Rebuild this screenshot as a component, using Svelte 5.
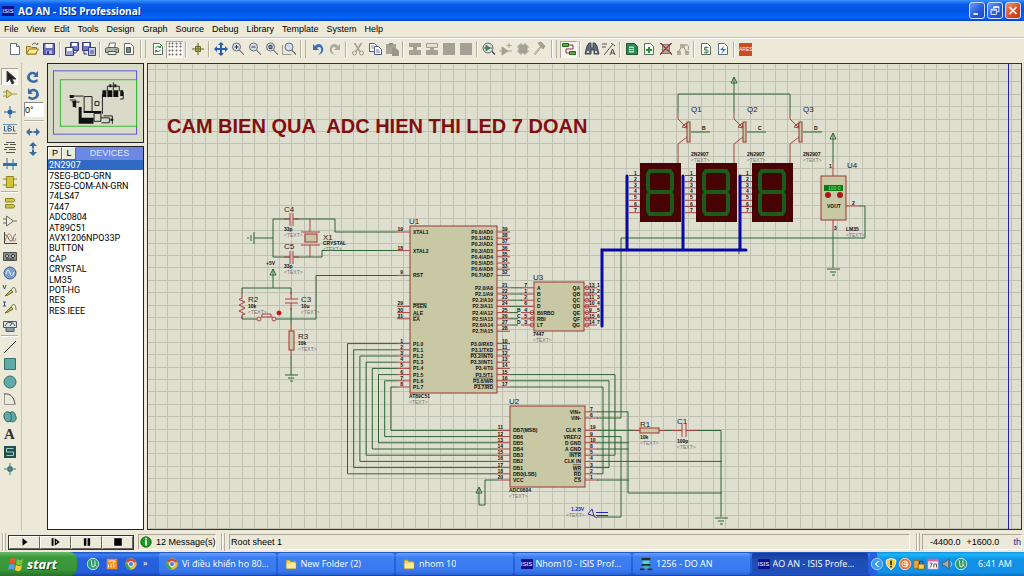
<script lang="ts">
  type Shape = [d: string, fill: string, stroke?: string];
  type Pin = [row: number, name: string, num: string, bar?: boolean];

  const circ = (x: number, y: number, r: number) => `M${x - r} ${y}a${r} ${r} 0 1 0 ${2 * r} 0a${r} ${r} 0 1 0 ${-2 * r} 0z`;
  const page = "M3.5 2.5h6l3 3v8h-9z";
  const lens: Shape[] = [
    ["M9 9l5 5", "none", "#777"],
    ["M10 9l4 4", "none", "#aaa"],
    [circ(6.5, 6, 4), "#cfe0ec", "#66717c"],
  ];

  const icons: Record<string, Shape[]> = {
    new: [[page, "#fff", "#5c6b86"], ["M9.5 2.5v3h3", "#dfe8f4", "#5c6b86"]],
    open: [["M2.5 13V5.5h4l1 1h5V13z", "#f0d060", "#93792a"], ["M2.5 13l3-5h9l-3 5z", "#ffe98c", "#93792a"], ["M8 4c2-3 4-2 5 0l1-2", "none", "#555"]],
    save: [["M2.5 2.5h11v11h-11z", "#6468ba", "#383c82"], ["M4.5 3h7v4h-7z", "#eef0ff"], ["M5 9.5h6V13H5z", "#b9bcdf"], ["M6 10h2v3H6z", "#383c82"]],
    import: [["M6.5 1.5h8v8h-8z", "#7478c0", "#383c82"], ["M8 2h5v3H8z", "#fff"], ["M1.5 6.5h8v8h-8z", "#9fa5d2", "#383c82"], ["M3 7h5v3H3z", "#fff"], ["M10 12c3 0 3-1 3-3", "none", "#243080"]],
    export: [["M1.5 1.5h8v8h-8z", "#7478c0", "#383c82"], ["M3 2h5v3H3z", "#fff"], ["M7.5 6.5h7v8h-7z", "#c6cbe6", "#383c82"], ["M9 10h4M9 12h4", "none", "#383c82"], ["M3 10v3h3", "none", "#243080"]],
    print: [["M4.5 7l1-5h6l-1 5z", "#fff", "#62706d"], ["M1.5 7.5l2-1h9l2 1v4h-13z", "#a8b5a6", "#505c55"], ["M4 10.5h8v3H4z", "#e8eee4", "#505c55"], ["M11 8h2v1h-2z", "#37a837"]],
    area: [[page, "#fff", "#5c6b66"], ["M5.5 6.5h4v5h-4z", "#7c8a86", "#49524f"]],
    refresh: [[page, "#fff", "#5c6b66"], ["M5.5 7.5a3 3 0 0 1 4-2M10.5 8.5a3 3 0 0 1-4 2", "none", "#1e9440"], ["M8 7h3V4zM8 9H5v3z", "#1e9440"]],
    grid: [["M2 2h1v1H2zM5 2h1v1H5zM9 2h1v1H9zM13 2h1v1h-1zM2 5h1v1H2zM5 5h1v1H5zM9 5h1v1H9zM13 5h1v1h-1zM2 9h1v1H2zM5 9h1v1H5zM9 9h1v1H9zM13 9h1v1h-1zM2 13h1v1H2zM5 13h1v1H5zM9 13h1v1H9zM13 13h1v1h-1z", "#333", "#777"]],
    origin: [["M8 2v12M2 8h12", "none", "#55601c"], ["M5.5 5.5h5v5h-5z", "#b7b85c", "#66702a"], ["M8 5v6M5 8h6", "none", "#66702a"]],
    pan: [["M8 1l3 3H9v3h3V5l3 3-3 3V9H9v3h2l-3 3-3-3h2V9H4v2L1 8l3-3v2h3V4H5z", "#2660b4"]],
    zoomin: [...lens, ["M6.5 4v4M4.5 6h4", "none", "#333"]],
    zoomout: [...lens, ["M4.5 6h4", "none", "#333"]],
    zoomall: [...lens, ["M5 4.5h3v3H5z", "#8a9aaa", "#444"]],
    zoomarea: [["M1.5 4v9.5h9", "none", "#999"], ["M10 9l5 5M11 9l4 4", "none", "#777"], [circ(8, 6, 4), "#cfe0ec", "#66717c"]],
    undo: [["M3 3v6h6L7 7c2-2 5-1 4 3-.5 2-2 3-3 4 4-1 6-4 5-7C12 2 7 2 5 5z", "#3d70b8"]],
    redo: [["M13 3v6H7l2-2C7 5 4 6 5 10c.5 2 2 3 3 4-4-1-6-4-5-7C4 2 9 2 11 5z", "#aaa99c"]],
    cut: [["M4 2l6 9M12 2l-6 9", "none", "#9b998c"], ["M5 2l5 8M11 2l-5 8", "none", "#9b998c"], [circ(4.5, 12, 2), "none", "#9b998c"], [circ(11.5, 12, 2), "none", "#9b998c"]],
    copy: [["M2.5 2.5h5l2 2v6h-7z", "#fff", "#4b5a86"], ["M4 5h3M4 7h3", "none", "#8090b8"], ["M7.5 5.5h4l3 3v5h-7z", "#fff", "#4b5a86"], ["M9 9h3M9 11h4", "none", "#6478b0"]],
    paste: [["M2 3h10v10H2z", "#a5a396"], ["M5 2h4v2H5z", "#8f8d81"], ["M8 7h4l3 3v5H8z", "#98968a"]],
    blockcopy: [["M2 2h12v4h-4v3h4v5H2V9h4V6H2z", "#a3a195"]],
    blockmove: [["M2.5 2.5h11v4h-4v3h-3v-3h-4z", "#e2dfcf", "#a3a195"], ["M2 9h12v5H2zM6 6h4v4H6z", "#a3a195"]],
    block: [["M2 2h12v12H2z", "#a3a195"]],
    pick: [["M10 10l4 4M11 10l3 3", "none", "#555"], [circ(7, 7, 5), "#d3e1e8", "#586c72"], ["M5 4.5v5l4-2.5z", "#67a95c", "#3c7138"], ["M3 7h8", "none", "#3c7138"]],
    make: [["M4 6v8l6-4z", "#a3a195", "#a3a195"], ["M1 10h13M11 2v5M8.5 4.5h5", "none", "#a3a195"]],
    pack: [["M4 4h8v8H4z", "#a3a195", "#a3a195"], ["M2 6h12M2 10h12M6 2v12M10 2v12", "none", "#a3a195"]],
    hammer: [["M6 2l3-1 4 4-2 3-2-2z", "#a3a195", "#a3a195"], ["M9 5l-7 8M10 5l-7 9", "none", "#a3a195"]],
    wire: [["M1.5 2.5h6v3h-6z", "#56b03d", "#256a1c"], ["M8.5 10.5h6v3h-6z", "#56b03d", "#256a1c"], ["M8 4h4v4H5v4h4", "none", "#902c4c"]],
    find: [["M3 5l2-3h2v5h2V2h2l2 3 2 8h-5V9H7v4H1z", "#5f6874", "#414a55"], ["M3 10h2v2H3zM11 10h2v2h-2z", "#c8d2dc"]],
    props: [["M1 3h5M1 6h4M3 14l9-11M10 2l4 3", "none", "#555"], ["M9 14l2.5-6 2.5 6M10 12h3", "none", "#444"]],
    netlist: [["M2.5 2.5h8l3 3v8h-11z", "#2c8756", "#285340"], ["M5 5.5h5v6H5z", "#bfe4c9"], ["M5.5 7.5h4M5.5 9.5h4", "none", "#2c8756"]],
    addsheet: [[page, "#fff", "#567060"], ["M7 6h2v2h2v2H9v2H7v-2H5V8h2z", "#1f9928"]],
    delsheet: [["M4.5 3.5h7v9h-7z", "#b0aca0", "#777"], ["M2 2l12 12M14 2L2 14M3 2l11 11M13 2L2 13", "none", "#ab403c"]],
    exitsheet: [["M5 3h5v4H5zM2 10h4v4H2zM10 10h4v4h-4z", "#aeac9f"], ["M6 7l-3 4M9 7l3 4M10 4c4-1 4 3 3 5", "none", "#8e8c80"]],
    bom: [[page, "#fff", "#567060"], ["M10.5 6.5h-4v2.500h3.500v2.500h-4M8 5v8", "none", "#5d8064"]],
    erc: [[page, "#fff", "#567080"], ["M9 5L5 9h3l-2 4 5-5H8z", "#2d70cc"]],
    select: [["M5 2v11l3-3 2 5 2-1-2-4h4z", "#222", "#444"]],
    comp: [["M4.5 4v8l6-4z", "#d9d16c", "#9d9342"], ["M1 6h3M1 10h3M11 8h4", "none", "#9d9342"]],
    junction: [["M8 2v12M2 8h12", "none", "#2f5f92"], [circ(8, 8, 2.5), "#2564a8"]],
    label: [["M1 3.5h14M1 12.5h14", "none", "#6f93b0"], ["M2.5 5v5h2M6 5v5h2.5l1-1-1-1.5 1-1-1-1.5zM6 7.5h2M11.5 5v5h2", "none", "#2a5c8c"]],
    script: [["M4 3.5h9M2 5.5h4M8 5.5h6M3 8.5h10M2 10.5h3M7 10.5h7M4 13.5h9", "none", "#55554c"]],
    bus: [["M5 2v5M11 9v5M5 9v4M11 3v4", "none", "#2f73ae"], ["M1 7h14v3H1z", "#2f73ae"]],
    sub: [["M4.5 2.5h7v11h-7z", "#cfc53d", "#8f8521"], ["M1 5h3M1 11h3M12 5h3M12 11h3", "none", "#8f8521"]],
    terminal: [["M3.5 3.5h8l1.5 1.5-1.5 2H3.5zM3.5 9.5h8l1.5 1.5-1.5 2H3.5z", "#cdc44c", "#8f8521"]],
    pin: [["M4.5 3v10l7-5zM1 6h3M1 10h3M12 8h3", "#efecdc", "#6a6a60"]],
    graph: [["M2.5 2v11.5H15", "none", "#444"], ["M3 11c3-9 5-9 7-3s3 3 4 0", "none", "#d07a2a"], ["M3 5c4 0 3 6 6 6s2-6 5-7", "none", "#54609a"]],
    tape: [["M1.5 4.5h13v8h-13z", "#8b918e", "#4c504f"], [circ(5, 8, 1.5), "#eee", "#333"], [circ(11, 8, 1.5), "#eee", "#333"], ["M4 11h8", "none", "#333"]],
    gen: [[circ(8, 8, 6), "#7b9fd2", "#3f5c8c"], ["M4 9c1-5 3-5 4-1s3 3 4-1", "none", "#fff"]],
    vprobe: [["M1 2l1.5 4L4 2", "none", "#3b4c90"], ["M3 13l6-6 2 2-5 3z", "#c8bf56", "#6e6928"], ["M9 7c3-5 5-2 5 3", "none", "#6e7440"]],
    iprobe: [["M1 2h3M2.5 2v4M1 6h3", "none", "#3b4c90"], ["M3 13l6-6 2 2-5 3z", "#c8bf56", "#6e6928"], ["M9 7c3-5 5-2 5 3", "none", "#6e7440"]],
    meter: [["M1.5 3.5h13v6h-13z", "#dce4e8", "#4d5c66"], ["M3 8c2-5 8-5 10 0M8 8l2-3", "none", "#3b4a54"], ["M4 9.5h8v4H4z", "#8b9aa2", "#4d5c66"]],
    line: [["M2 14L14 2", "none", "#333"]],
    box: [["M2.5 2.5h11v11h-11z", "#5faaa6", "#35716f"]],
    circle: [[circ(8, 8, 6), "#5faaa6", "#35716f"]],
    arc: [["M2.5 3v10.5h11", "none", "#999"], ["M2 3c7-1 10 4 11 10", "none", "#444"]],
    path2d: [["M8 4C5 1 1 4 2 8s3 6 6 4c3 2 7 0 6-4s-3-7-6-4z", "#5faaa6", "#2a6664"], ["M8 4c2 2 1 3 1 4s1 3-1 4", "none", "#2a6664"]],
    symbol: [["M2 2h12v12H2z", "#23504f"], ["M11.5 4.5h-7V8h7v3.5h-7", "none", "#9bd0ca"]],
    marker: [["M8 2v12M2 8h12", "none", "#37807e"], ["M6 6h4v4H6z", "#4d9a98", "#2a5c5a"]],
    cw: [["M13 2v6H8l2-2c-3-2-6 0-5 3 1 3 5 3 7 1l1 2c-4 4-10 1-11-3C2 4 7 1 11 4z", "#3a68a8"]],
    ccw: [["M3 2v6h5L6 6c3-2 6 0 5 3-1 3-5 3-7 1l-1 2c4 4 10 1 11-3C14 4 9 1 5 4z", "#3a68a8"]],
    fliph: [["M1 8l4-4v3h6V4l4 4-4 4V9H5v3z", "#3f6aa8"], ["M8 5v6", "none", "#e8e5d8"]],
    flipv: [["M8 1l4 4H9v6h3l-4 4-4-4h3V5H4z", "#3f6aa8"], ["M5 8h6", "none", "#e8e5d8"]],
    play: [["M4 2v12l8-6z", "#000"]],
    step: [["M1 2h3v12H1zM6 2v12l8-6z", "#000"], ["M8 6v4l2-2z", "#ece9d8"]],
    pause: [["M3 2h4v12H3zM9 2h4v12H9z", "#000"]],
    stop: [["M2 2h12v12H2z", "#000"]],
    utorrent: [[circ(8, 8, 6.5), "#2f9c6c", "#d5f3e4"], ["M6 4l1 7c3 1 4-1 3-7M10 9l2 2", "none", "#fff"]],
    office: [["M2 2h12v12H2z", "#f48c26"], ["M4 12V9M7 12V7M10 12V5M4 5c3-1 5-1 8 0", "none", "#fff"]],
    chrome: [[circ(8, 8, 6.5), "#e9c02c"], ["M8 8L2 5c3-5 9-4 12 0z", "#dc4434"], ["M2 5l6 9c-5 0-8-5-6-9z", "#35a44c"], [circ(8, 8, 3), "#4d86dc", "#fff"]],
    folder: [["M2.5 13.5v-10h4l1 1.5h6v8.5z", "#f3d264", "#b48b26"], ["M3 7h10.5v6H3z", "#ffeaa0"]],
    robot: [["M3 1h10v3H3z", "#2b2b2b"], ["M4 4h8v4H4z", "#4dd6d0"], ["M3 8h10v2H3z", "#222"], ["M5 10h6v3H5z", "#35b8b2"], ["M1 13h5v2H1zM10 13h5v2h-5z", "#333"]],
    shield: [["M8 1.5l5.5 2c0 5-1 8-5.5 11-4.5-3-5.5-6-5.5-11z", "#f6cf3c", "#fff"], ["M7 4h2v5H7zM7 10h2v2H7z", "#333"]],
    av: [[circ(8, 8, 6.5), "#e8742a", "#ffd8b8"], ["M11 9H7V7l3-1v5", "none", "#fff"], [circ(8, 8, 3.5), "none", "#fff"]],
    lock: [["M2 4h6v9H2z", "#e8a93a", "#9a6818"], ["M7 8h7v6H7z", "#f3d35a", "#7a5a14"], ["M8.5 8V5h4v3", "none", "#333"]],
    cal: [["M2 3h12v11H2z", "#fff", "#8a78c8"], ["M2 2h12v3H2z", "#e85c9c"], ["M4 7h3l-2 5M9 12V8h3v4", "none", "#444"]],
    speaker: [["M3 6h3l4-4v12l-4-4H3z", "#a9aeb6", "#50545c"], ["M12 5c2 2 2 4 0 6", "none", "#dfe6ee"]],
    windows: [["M2 3c2-1.5 4-1.5 6 0L7 8C5 6.5 3 6.5 1 8z", "#e8542c"], ["M9 3c2 1.5 4 1.5 6 0l-1 5c-2 1.5-4 1.5-6 0z", "#7cc43c"], ["M1 9c2-1.5 4-1.5 6 0l-1 5c-2-1.5-4-1.5-6 0z", "#5c9ce8"], ["M8 9c2 1.5 4 1.5 6 0l-1 5c-2 1.5-4 1.5-6 0z", "#f4cc3c"]],
    chevron: [[circ(8, 8, 6.5), "#3b9bf4", "#a8d8ff"], ["M9.5 4.5L6 8l3.5 3.5M10.5 4.5L7 8l3.5 3.5", "none", "#fff"]],
    info: [[circ(8, 8, 6), "#1f9a1f", "#0c6a0c"], ["M7 3h2v2H7zM7 6h2v6H7z", "#fff"]],
  };

  const menus = ["File", "View", "Edit", "Tools", "Design", "Graph", "Source", "Debug", "Library", "Template", "System", "Help"];

  // "|" is a thin separator, "#" the grip between two bars
  const toolbar = "new open save | import export | print area # refresh grid | origin | pan zoomin zoomout zoomall zoomarea # undo redo | cut copy paste | blockcopy blockmove block block | pick make pack hammer # wire | find props | netlist addsheet delsheet exitsheet | bom erc | ares".split(" ");
  const modes = "select comp junction label script bus sub | terminal pin graph tape gen vprobe iprobe meter | line box circle arc path2d text symbol marker".split(" ");

  const devices = ["2N2907", "7SEG-BCD-GRN", "7SEG-COM-AN-GRN", "74LS47", "7447", "ADC0804", "AT89C51", "AVX1206NPO33P", "BUTTON", "CAP", "CRYSTAL", "LM35", "POT-HG", "RES", "RES.IEEE"];
  const tasks = [
    { icon: "chrome", title: "Vi điều khiển họ 80..." },
    { icon: "folder", title: "New Folder (2)" },
    { icon: "folder", title: "nhom 10" },
    { icon: "isis", title: "Nhom10 - ISIS Prof..." },
    { icon: "robot", title: "1256 - DO AN" },
    { icon: "isis", title: "AO AN - ISIS Profe..." },
  ];

  let device = $state("2N2907");
  let mode = $state("select");
  let task = $state(5);
  let angle = $state("0°");

  const row = (k: number) => 232 + k * 6.2;
  const series = (from: number, names: string[], nums: number[], bars: number[] = []): Pin[] =>
    names.map((n, i) => [from + i, n, String(nums[i]), bars.includes(i)]);
  const seq = (n: number) => Array.from({ length: n }, (_, i) => i);

  // two snap steps per visible grid line
  const gridX = seq(180).map((i) => `M${Math.round(7 + i * 12.4)}.5 0V1400`).join("");
  const gridY = seq(110).map((i) => `M0 ${Math.round(5 + i * 12.4)}.5H2300`).join("");

  const chips = [
    {
      ref: "U1", part: "AT89C51", x: 410, y: 226, w: 87, h: 167,
      left: [[0, "XTAL1", "19"], [3, "XTAL2", "18"], [7, "RST", "9"], [12, "PSEN", "29", true], [13, "ALE", "30"], [14, "EA", "31", true], ...series(18, seq(8).map((i) => `P1.${i}`), seq(8).map((i) => i + 1))] as Pin[],
      right: [
        ...series(0, seq(8).map((i) => `P0.${i}/AD${i}`), seq(8).map((i) => 39 - i)),
        ...series(9, seq(8).map((i) => `P2.${i}/A${i + 8}`), seq(8).map((i) => 21 + i)),
        ...series(18, ["P3.0/RXD", "P3.1/TXD", "P3.2/INT0", "P3.3/INT1", "P3.4/T0", "P3.5/T1", "P3.6/WR", "P3.7/RD"], seq(8).map((i) => 10 + i), [2, 6, 7]),
      ],
    },
    {
      ref: "U3", part: "7447", x: 534, y: 282, w: 50, h: 49,
      left: series(9, ["A", "B", "C", "D", "BI/RBO", "RBI", "LT"], [7, 1, 2, 6, 4, 5, 3]),
      right: series(9, ["QA", "QB", "QC", "QD", "QE", "QF", "QG"], [13, 12, 11, 10, 9, 15, 14]),
    },
    {
      ref: "U2", part: "ADC0804", x: 510, y: 406, w: 75, h: 81,
      left: series(32, ["DB7(MSB)", "DB6", "DB5", "DB4", "DB3", "DB2", "DB1", "DB0(LSB)", "VCC"], [11, 12, 13, 14, 15, 16, 17, 18, 20]),
      right: [...series(29, ["VIN+", "VIN-"], [7, 6]), ...series(32, ["CLK R", "VREF/2", "D GND", "A GND", "INTR", "CLK IN", "WR", "RD", "CS"], [19, 9, 10, 8, 5, 4, 3, 2, 1], [4, 6, 7, 8])],
    },
  ];

  const wires = [
    "M273 238H254M290 219H273V257H290M294 219H335V232H397M294 257H322V250.5H397",
    "M273 275V288M242 294V288H291V294M242 316V319H256M276 319H316V275.5H397M291 308V325M291 356V375",
    ...seq(8).map((i) => `M397 ${row(18 + i)}H${347.5 + 6.2 * i}V${row(39 - i)}H497`),
    ...seq(4).map((i) => `M510 ${row(9 + i)}H522`),
    ...seq(3).map((i) => `M510 ${row(13 + i)}H518`),
    `M510 ${row(23)}H615V${row(36)}H597`,
    `M510 ${row(24)}H609V${row(38)}H597`,
    `M510 ${row(25)}H603V${row(39)}H597`,
    `M497 ${row(40)}H485V505H479V493`,
    `M597 ${row(29)}H628V493H722`,
    `M597 ${row(30)}H621V238H865V206H859`,
    `M597 ${row(32)}H634M666 430.5H672M697 430.5H721V517`,
    `M597 ${row(33)}H621V517H597`,
    `M597 ${row(34)}H629M597 ${row(35)}H629M597 ${row(37)}H722M597 ${row(40)}H629`,
    "M734 83V113M678 113V94H790V113M833 139V162M833 232V268M739 251V254",
  ];
  const parts = [
    "M290 213V226M293 213V226M284 219H290M293 219H299M290 251V264M293 251V264M284 257H290M293 257H299",
    "M310 219V232M301 232H320M301 245H320M310 245V257",
    "M242 294V298L239 299.5L245 302L239 305L245 308L239 311L245 314L242 315V319",
    "M291 292V299M285 299H298M285 303H298M291 303V310M291 325V331M291 350V356",
    "M256 319H258M261 317H273M262 314H271V317M262 314V317",
    "M634 430.5H640M659 430.5H666M672 430.5H682M682 424V437M686 424V437M686 430.5H697",
    "M833 162V176M833 219V232M846 206H859",
  ];
  const grounds = [[291, 375], [833, 269], [721, 518]];
  const powers = [[273, 269], [734, 77], [833, 133], [479, 487]];
  const transistors = [{ n: 1, net: "B" }, { n: 2, net: "C" }, { n: 3, net: "D" }];

  const refs: Array<[number, number, string, string]> = [
    [284, 212, "C4", "33p"], [284, 249, "C5", "33p"], [323, 240, "X1", "CRYSTAL"], [248, 302, "R2", "10k"],
    [301, 302, "C3", "10u"], [298, 339, "R3", "10k"], [640, 427, "R1", "10k"], [677, 424, "C1", "100p"],
  ];
  const valueDrop: Record<string, number> = { C4: 19, C5: 19, X1: 5, C1: 19, R1: 12 };
</script>

{#snippet icon(name: string)}
  {#if name === "isis" || name === "ares"}
    <span class="logo {name}">{name.toUpperCase()}</span>
  {:else if name === "text"}
    <span class="letter">A</span>
  {:else}
    <svg class="icon" viewBox="0 0 16 16" aria-hidden="true">
      {#each icons[name] as [d, fill, stroke]}
        <path {d} {fill} stroke={stroke ?? "none"} />
      {/each}
    </svg>
  {/if}
{/snippet}

<main class="desktop">
  <header class="titlebar">
    {@render icon("isis")}
    <h1>AO AN - ISIS Professional</h1>
    <button class="win" aria-label="Minimize"><svg viewBox="0 0 16 16"><path d="M4 11h5v2H4z" fill="#fff" /></svg></button>
    <button class="win" aria-label="Restore"><svg viewBox="0 0 16 16"><path d="M6.5 6V3.5h6v6H10M3.5 6.5h6v6h-6zM3.5 7.5h6M6.5 4.5h6" fill="none" stroke="#fff" /></svg></button>
    <button class="win close" aria-label="Close"><svg viewBox="0 0 16 16"><path d="M4 4l8 8M12 4l-8 8" stroke="#fff" stroke-width="2" /></svg></button>
  </header>

  <nav class="menubar">
    {#each menus as item}<button>{item}</button>{/each}
  </nav>

  <div class="toolbar">
    {#each toolbar as name}
      {#if name === "|"}<i class="sep"></i>
      {:else if name === "#"}<i class="grip"></i>
      {:else}<button class="tool" class:pressed={name === "grid" || name === "wire"} aria-label={name}>{@render icon(name)}</button>
      {/if}
    {/each}
  </div>

  <div class="work">
    <div class="modes">
      {#each modes as name}
        {#if name === "|"}<i class="rule"></i>
        {:else}<button class="tool" class:pressed={mode === name} aria-label={name} onclick={() => (mode = name)}>{@render icon(name)}</button>
        {/if}
      {/each}
    </div>

    <div class="orient">
      <button class="tool" aria-label="Rotate clockwise">{@render icon("cw")}</button>
      <button class="tool" aria-label="Rotate anti-clockwise">{@render icon("ccw")}</button>
      <input aria-label="Rotation angle" bind:value={angle} />
      <i class="rule"></i>
      <button class="tool" aria-label="Mirror horizontally">{@render icon("fliph")}</button>
      <button class="tool" aria-label="Mirror vertically">{@render icon("flipv")}</button>
    </div>

    <aside class="side">
      <svg class="overview" viewBox="0 0 96 78" aria-label="Overview">
        <rect x="5.5" y="6.5" width="84" height="64" fill="none" stroke="#5858c8" />
        <rect x="12.5" y="15.5" width="77" height="47" fill="none" stroke="#38b838" />
        <path d="M36.5 32.5h8v15h-8zM46.5 49.5h7v8h-7zM47.5 37.5h4v4h-4zM22 32h14M22 36h6v8M24 38h8M55 30v20M60 27V22h12v5M66 18v8M76 28v7h-3M56 52h9v8M53 54h9v5h-8" fill="none" stroke="#222" />
        <path d="M31 43h3v11h12v6H31zM55 26h4v7h-4zM60 26h5v7h-5zM66 26h5v7h-5zM73 26h3v6h-3zM22 31h4v3h-4zM25 37h3v6h-3zM36 47h18v2H36zM63 55h3v2h-3zM62 20h2v3h-2zM67 20h2v3h-2z" fill="#111" />
      </svg>
      <section class="devices">
        <header><button>P</button><button>L</button><h2>DEVICES</h2></header>
        <ul>
          {#each devices as name}
            <li><button class:on={device === name} onclick={() => (device = name)}>{name}</button></li>
          {/each}
        </ul>
      </section>
    </aside>

    <svg class="sheet" role="img" aria-label="Schematic">
      <path class="grid" d={gridX + gridY} />
      <g transform="translate(-148 -64)">
        <path class="edge" d="M1008.5 0V4000" />
        <text class="banner" x="167" y="133">CAM BIEN QUA&nbsp; ADC HIEN THI LED 7 DOAN</text>

        <g class="wire">
          {#each wires as d}<path {d} />{/each}
          {#each grounds as [x, y]}<path d="M{x - 6} {y}h13M{x - 3} {y + 3}h6M{x - 1} {y + 6}h3" />{/each}
          {#each powers as [x, y]}<path d="M{x} {y}l3 6h-6zv6" />{/each}
          <path d="M254 232V244M251 235V241M248 237V239" />
        </g>

        {#each chips as chip}
          <g class="chip">
            <rect x={chip.x} y={chip.y} width={chip.w} height={chip.h} />
            <text class="ref" x={chip.x - 1} y={chip.y - 2}>{chip.ref}</text>
            <text class="val" x={chip.x - 1} y={chip.y + chip.h + 5}>{chip.part}</text>
            <text class="tag" x={chip.x - 1} y={chip.y + chip.h + 11}>&lt;TEXT&gt;</text>
            {#each chip.left as [k, name, num, bar]}
              <path d="M{chip.x - 13} {row(k)}h13" />
              <text class="pin" class:bar x={chip.x + 3} y={row(k) + 2}>{name}</text>
              <text class="pin end" x={chip.x - 7} y={row(k) - 1}>{num}</text>
            {/each}
            {#each chip.right as [k, name, num, bar]}
              <path d="M{chip.x + chip.w} {row(k)}h13" />
              <text class="pin end" class:bar x={chip.x + chip.w - 4} y={row(k) + 2}>{name}</text>
              <text class="pin" x={chip.x + chip.w + 5} y={row(k) - 1}>{num}</text>
            {/each}
          </g>
        {/each}
        <g class="bubble">
          {#each seq(3) as i}<circle cx="532" cy={row(13 + i)} r="2" />{/each}
          {#each seq(7) as i}
            <circle cx="587" cy={row(9 + i)} r="2" />
            <text class="pin" x="597" y={row(9 + i) - 1}>{i + 1}</text>
          {/each}
        </g>
        {#each ["B", "C", "D"] as net, i}
          <text class="pin" x="517" y={row(13 + i) - 1}>{net}</text>
        {/each}

        <g class="part">
          {#each parts as d}<path {d} />{/each}
          <rect x="305" y="234" width="12" height="8" />
          <rect x="289" y="331" width="5" height="19" />
          <rect x="640" y="428" width="19" height="5" />
          <circle cx="259" cy="319" r="2" />
          <circle cx="274" cy="319" r="2" />
          <circle class="hot" cx="279" cy="313" r="2" />
        </g>
        {#each refs as [x, y, ref, value]}
          {@const dy = valueDrop[ref] ?? 6}
          <text class="ref" {x} {y}>{ref}</text>
          <text class="val" {x} y={y + dy}>{value}</text>
          <text class="tag" {x} y={y + dy + 6}>&lt;TEXT&gt;</text>
        {/each}
        <text class="val" x="266" y="265">+5V</text>

        {#each transistors as q, i}
          <g transform="translate({i * 56} 0)">
            <g class="part">
              <path d="M678 113V119L687 128M682 127l5 1-1-5zM687 137L678 144V163" />
              <rect x="687" y="122" width="3" height="20" />
            </g>
            <path class="wire" d="M691 132H710" />
            <text class="pin" x="702" y="130">{q.net}</text>
            <text class="ref" x="691" y="112">Q{q.n}</text>
            <text class="val" x="691" y="156">2N2907</text>
            <text class="tag" x="691" y="162">&lt;TEXT&gt;</text>
            <rect class="display" x="640" y="163" width="41" height="59" />
            <path class="segment" d="M650 171H670L672 174V189L670 192H650L648 189V174ZM650 192L648 195V211L650 214H670L672 211V195L670 192" />
            {#each seq(7) as p}
              <path class="stub" d="M629 {175.5 + p * 6.2}H640" />
              <text class="pin" x="634" y={174.5 + p * 6.2}>{p + 1}</text>
            {/each}
          </g>
        {/each}

        <path class="busline" d="M602 326V250H746M627 176V250M683 176V250M740 176V250" />

        <rect class="sensor" x="821" y="176" width="25" height="44" />
        <rect x="824" y="185" width="19" height="6" fill="#0b7a14" />
        <text class="lcd" x="828" y="190">100.0</text>
        <circle cx="828" cy="195" r="3" fill="#a81818" />
        <circle cx="840" cy="195" r="3" fill="#a81818" />
        <text class="pin" x="827" y="208">VOUT</text>
        <text class="pin" x="829" y="168">1</text>
        <text class="pin" x="852" y="205">2</text>
        <text class="pin" x="834" y="230">3</text>
        <text class="ref" x="847" y="168">U4</text>
        <text class="val" x="846" y="231">LM35</text>
        <text class="tag" x="846" y="237">&lt;TEXT&gt;</text>

        <g class="probe">
          <path d="M588 514L592 509L594 516ZM594 516L597 518M596 512.5H608M596 515.5H608" />
          <text class="val" x="571" y="511">1.23V</text>
          <text class="tag" x="566" y="517">&lt;TEXT&gt;</text>
        </g>
      </g>
    </svg>
  </div>

  <footer class="status">
    <i class="grip"></i>
    <div class="run">
      {#each ["play", "step", "pause", "stop"] as name}<button aria-label={name}>{@render icon(name)}</button>{/each}
    </div>
    <button class="messages">{@render icon("info")}12 Message(s)</button>
    <i class="grip"></i>
    <p class="path">Root sheet 1</p>
    <i class="grip"></i>
    <p class="coords"><span>-4400.0</span><span>+1600.0</span><em>th</em></p>
  </footer>

  <footer class="taskbar">
    <button class="start">{@render icon("windows")}start</button>
    <div class="quick">
      {#each ["utorrent", "office", "chrome"] as name}<button aria-label={name}>{@render icon(name)}</button>{/each}
      <span>»</span>
    </div>
    {#each tasks as t, i}
      <button class="task" class:active={task === i} onclick={() => (task = i)}>{@render icon(t.icon)}<span>{t.title}</span></button>
    {/each}
    <div class="tray">
      {#each ["chevron", "shield", "av", "lock", "cal", "speaker", "utorrent"] as name}<button aria-label={name}>{@render icon(name)}</button>{/each}
      <time>6:41 AM</time>
    </div>
  </footer>
</main>

<style>
  :global(body) { background: #ece9d8; overflow: hidden; }
  .desktop { height: 100vh; display: flex; flex-direction: column; background: #ece9d8; color: #000; font: 9px/12px "Open Sans", "Noto Sans", sans-serif; }
  h1, h2, p, ul { margin: 0; padding: 0; }
  button { margin: 0; padding: 0; border: 0; background: none; color: inherit; font: inherit; white-space: nowrap; }
  .icon { display: block; width: 16px; height: 16px; flex: none; }
  .logo { flex: none; width: 12px; height: 10px; background: #10108c; color: #fff; font: 6px/10px "Liberation Sans", sans-serif; text-align: center; overflow: hidden; }
  .ares { width: 13px; height: 13px; background: #cc4a24; line-height: 12px; font-size: 5px; }
  .letter { font: bold 15px/16px "Liberation Serif", serif; color: #333; }

  .titlebar { display: flex; align-items: center; gap: 2px; height: 21px; flex: none; padding: 0 3px 0 2px; box-sizing: border-box; background: linear-gradient(#3a93ff, #0a5ce8 20%, #0054e3 50%, #0566fd 85%, #0040c0); color: #fff; }
  h1 { flex: 1; margin-left: 2px; font: bold 10px/20px "Open Sans", "Noto Sans", sans-serif; text-shadow: 1px 1px #0a2a80; }
  .win { width: 16px; height: 17px; border: 1px solid #cfdffa; border-radius: 3px; background: linear-gradient(135deg, #6c9cf4, #2258dc 60%, #1b50c8); }
  .win svg { display: block; width: 14px; height: 15px; }
  .close { background: linear-gradient(135deg, #f09070, #dc4a22 60%, #c43c18); }

  .menubar { display: flex; gap: 8px; height: 16px; flex: none; padding: 0 4px; border-bottom: 1px solid #c5c2b2; }
  .menubar button { font: 9px/15px "Liberation Sans", sans-serif; }

  .toolbar { display: flex; align-items: center; height: 22px; flex: none; padding: 0 6px; box-sizing: border-box; box-shadow: inset 0 1px #fff; }
  .tool { width: 17px; height: 17px; display: flex; align-items: center; justify-content: center; box-sizing: border-box; }
  .pressed { background: #f6f5ee; box-shadow: inset 1px 1px #aca899, inset -1px -1px #fff; }
  .sep { width: 2px; height: 16px; margin: 0 2px; background: linear-gradient(90deg, #b4b1a2 50%, #fff 50%); }
  .grip { width: 6px; height: 18px; margin: 0 3px; box-sizing: border-box; border: solid #b4b1a2; border-width: 0 1px; box-shadow: inset 1px 0 #fff; }
  .rule { height: 2px; margin: 1px 0; flex: none; background: linear-gradient(#b4b1a2 50%, #fff 50%); }

  .work { flex: 1; min-height: 0; display: flex; padding: 3px 2px 2px 0; }
  .modes { width: 22px; flex: none; display: flex; flex-direction: column; padding: 5px 3px 52px 1px; box-sizing: border-box; border-right: 1px solid #c5c2b2; }
  .modes .tool { flex: 1; min-height: 0; max-height: 18px; }
  .orient { width: 25px; flex: none; display: flex; flex-direction: column; padding: 5px 3px 0 2px; box-sizing: border-box; }
  .orient input { width: 20px; height: 15px; margin-bottom: 2px; padding: 0; border: 1px solid #888; border-right-color: #fff; border-bottom-color: #fff; box-sizing: border-box; background: #fff; font: 9px/12px "Liberation Sans", sans-serif; }

  .side { width: 97px; flex: none; display: flex; flex-direction: column; gap: 3px; margin-right: 3px; }
  .overview { width: 97px; height: 80px; flex: none; box-sizing: border-box; border: 1px solid #222; background: #dadac8; }
  .devices { flex: 1; min-height: 0; display: flex; flex-direction: column; border: 1px solid #222; background: #fff; }
  .devices header { display: flex; height: 13px; flex: none; background: #6c88e4; }
  .devices header button { width: 14px; border: 1px solid; border-color: #fff #666 #666 #fff; background: #ece9d8; font: 9px/11px "Liberation Sans", sans-serif; }
  h2 { flex: 1; color: #dfe6ff; font: 9px/13px "Liberation Sans", sans-serif; text-align: center; }
  .devices ul { list-style: none; display: grid; grid-auto-rows: 1fr; height: 156px; font: 9px/10px Roboto, sans-serif; }
  .devices li { display: flex; min-height: 0; }
  .devices li button { flex: 1; padding-left: 1px; text-align: left; }
  .devices .on { background: #316ac5; color: #fff; }

  .sheet { flex: 1; min-width: 0; height: 100%; box-sizing: border-box; border: 1px solid #333; background: #dfdfcf; }
  .sheet text { font-family: "Liberation Sans", sans-serif; }
  .grid { fill: none; stroke: #c0c0b0; }
  .edge { stroke: #2020a0; }
  .sheet .banner { font-size: 20px; font-weight: bold; fill: #801010; }
  .wire, .wire path { fill: none; stroke: #2c6434; }
  .chip rect, .sensor, .part rect { fill: #c8c8a4; stroke: #a03434; }
  .chip path, .part path, .bubble circle { fill: none; stroke: #a84040; }
  .part circle { fill: #dfdfcf; stroke: #a84040; }
  .part .hot { fill: #d01010; stroke: #d01010; }
  .sheet .ref { font-size: 8px; fill: #222; }
  .sheet .val { font-size: 5px; font-weight: bold; fill: #111; }
  .sheet .tag { font-size: 5px; fill: #777; }
  .sheet .pin { font-size: 5px; font-weight: bold; fill: #111; }
  .end { text-anchor: end; }
  .bar { text-decoration: overline; }
  .display { fill: #480404; }
  .segment { fill: none; stroke: #1c5c18; stroke-width: 4px; }
  .stub { stroke: #a84040; }
  .busline { fill: none; stroke: #0808a4; stroke-width: 3px; stroke-linecap: round; }
  .sheet .lcd { font-size: 5px; fill: #7cf07c; }
  .probe path { fill: none; stroke: #2828b0; }
  .sheet .probe .val { fill: #2828b0; }

  .status { display: flex; align-items: center; height: 20px; flex: none; padding-right: 2px; }
  .status .grip { width: 4px; margin: 0 2px; }
  .run { display: flex; margin-right: 4px; border: 1px solid #333; }
  .run button { width: 31px; height: 13px; display: flex; align-items: center; justify-content: center; border: 1px solid; border-color: #fff #666 #666 #fff; box-sizing: border-box; }
  .run .icon { width: 10px; height: 10px; }
  .messages, .path, .coords { height: 16px; box-sizing: border-box; border: 1px solid; border-color: #aca899 #fff #fff #aca899; font: 9px/14px "Liberation Sans", sans-serif; }
  .messages { display: flex; align-items: center; gap: 3px; width: 78px; margin-right: 3px; }
  .messages .icon { width: 14px; height: 14px; }
  .path { flex: 1; margin: 0 4px 0 2px; padding-left: 1px; }
  .coords { display: flex; gap: 6px; width: 100px; padding-left: 7px; }
  .coords em { margin-left: auto; color: #2020a0; font-style: normal; }

  .taskbar { display: flex; align-items: center; height: 24px; flex: none; background: linear-gradient(#1c4ec0, #3b80f2 10%, #2660dc 30%, #245edb 85%, #1941a5); color: #fff; }
  .start { display: flex; align-items: center; gap: 3px; width: 77px; height: 24px; padding-left: 8px; border-radius: 0 8px 8px 0; background: linear-gradient(#6db96b, #3c9a3c 20%, #389438 75%, #2a702c); font: italic bold 13px/22px "Open Sans", sans-serif; text-shadow: 1px 1px #1c4c1c; }
  .quick { display: flex; align-items: center; gap: 5px; width: 73px; padding-left: 9px; }
  .quick .icon { width: 14px; height: 14px; }
  .quick span { align-self: flex-start; }
  .task { flex: 1; min-width: 0; max-width: 160px; height: 22px; display: flex; align-items: center; gap: 3px; margin-right: 2px; padding-left: 6px; border-radius: 2px; background: linear-gradient(#6a9ffa, #3c80f4 20%, #3878ee 80%, #2c62d0); }
  .task .icon { width: 14px; height: 14px; }
  .task span:last-child { overflow: hidden; }
  .active { background: linear-gradient(#163c94, #1e4cb4 30%, #2050bc); }
  .tray { display: flex; align-items: center; width: 154px; height: 24px; flex: none; margin-left: auto; background: linear-gradient(90deg, #2660dc 7px, transparent 7px), linear-gradient(#1c8ce8, #18b8f4 10%, #1290e8 30%, #1290e8 85%, #0c6cb8); }
  .tray .icon { width: 14px; height: 14px; }
  time { margin-left: 10px; }
</style>
